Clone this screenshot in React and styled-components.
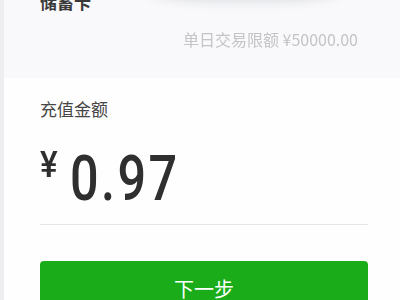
import React from 'react';
import styled, { createGlobalStyle } from 'styled-components';

const GlobalStyle = createGlobalStyle`
  html, body {
    margin: 0;
    padding: 0;
    background: #fefefe;
    overflow: hidden;
  }
  body {
    font-family: "Noto Sans CJK SC", "Noto Sans", sans-serif;
  }
`;

const Page = styled.div`
  display: flex;
  width: 400px;
  height: 300px;
  overflow: hidden;
`;

const Edge = styled.div`
  width: 4px;
  flex-shrink: 0;
  background: #eeeef0;
`;

const Main = styled.div`
  flex: 1;
  display: flex;
  flex-direction: column;
`;

const CardInfo = styled.section`
  position: relative;
  flex-shrink: 0;
  height: 78px;
  background: #f9f9fb;
  padding: 0 42px 0 36px;
  display: flex;
  flex-direction: column;
`;

const BlurredLogo = styled.div`
  position: absolute;
  left: 145px;
  top: -24px;
  width: 190px;
  height: 24px;
  border-radius: 40%;
  background: #d4d7dc;
  filter: blur(6px);
`;

const CardName = styled.div`
  margin-top: -7px;
  font-size: 17px;
  line-height: 17px;
  font-weight: 700;
  color: #3a3a3a;
`;

const Limit = styled.div`
  margin-top: 21px;
  align-self: flex-end;
  font-size: 16px;
  line-height: 16px;
  color: #c4c4c6;
  filter: blur(0.4px);
`;

const AmountSection = styled.section`
  flex-shrink: 0;
  background: #fefefe;
  padding: 22px 32px 0 36px;
  display: flex;
  flex-direction: column;
`;

const Label = styled.div`
  font-size: 17px;
  line-height: 17px;
  color: #454545;
`;

const AmountRow = styled.div`
  margin-top: 30px;
  height: 63px;
  display: flex;
  align-items: flex-start;
  color: #2f2f2f;
  font-family: Roboto, "Liberation Sans", sans-serif;
  font-weight: 500;
`;

const Currency = styled.span`
  font-size: 37px;
  line-height: 36px;
  margin-right: 10px;
  transform: scaleX(0.9);
  transform-origin: left center;
`;

const Value = styled.span`
  font-size: 63px;
  line-height: 63px;
  letter-spacing: 3px;
  transform: scaleX(0.8);
  transform-origin: left center;
`;

const Divider = styled.div`
  margin-top: 14px;
  height: 1px;
  background: #e6e6e6;
`;

const NextButton = styled.button`
  flex-shrink: 0;
  margin-top: 36px;
  height: 54px;
  border: none;
  border-radius: 4px;
  background: #1aad19;
  color: #fff;
  font-family: "Noto Sans CJK SC", sans-serif;
  font-size: 20px;
  padding: 0;
`;

export default function App() {
  return (
    <Page>
      <GlobalStyle />
      <Edge />
      <Main>
        <CardInfo>
          <BlurredLogo />
          <CardName>储蓄卡</CardName>
          <Limit>单日交易限额 ¥50000.00</Limit>
        </CardInfo>
        <AmountSection>
          <Label>充值金额</Label>
          <AmountRow>
            <Currency>¥</Currency>
            <Value>0.97</Value>
          </AmountRow>
          <Divider />
          <NextButton type="button">下一步</NextButton>
        </AmountSection>
      </Main>
    </Page>
  );
}
